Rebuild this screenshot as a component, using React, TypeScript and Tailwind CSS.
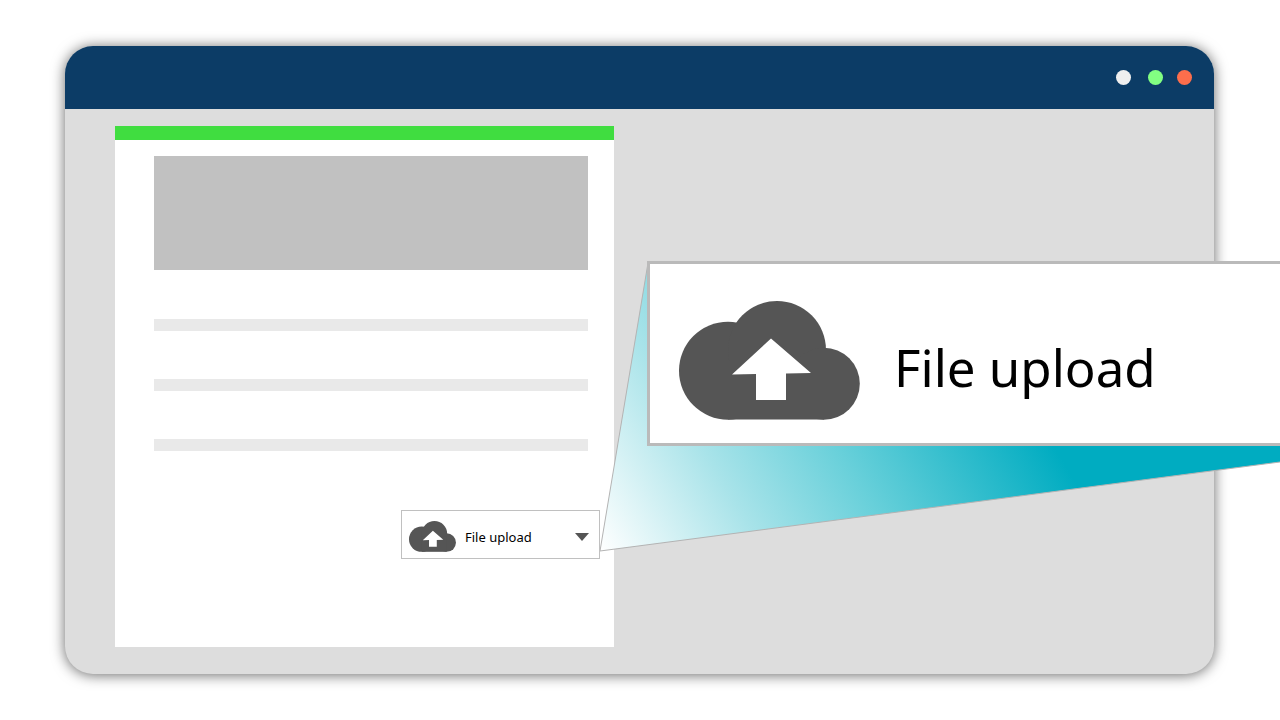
const FIELD_ROWS = ['first', 'second', 'third'];

function CloudUploadIcon({ className }: { className: string }) {
  return (
    <svg viewBox="0 0 181 119" className={className} aria-hidden="true">
      <g fill="#555555">
        <circle cx="49" cy="69.7" r="49" />
        <circle cx="98" cy="49" r="49" />
        <circle cx="144.8" cy="82.7" r="36" />
        <rect x="49" y="60" width="96" height="58.5" />
      </g>
      <path d="M92 37.5 132 72 107 72.5V99H77V73L53 73.5Z" fill="#ffffff" />
    </svg>
  );
}

function TitleBar() {
  return (
    <header className="flex h-[63px] items-center justify-end bg-[#0c3c66] pr-[22px]">
      <button type="button" aria-label="Minimize" className="mr-[17px] size-[15px] rounded-full bg-[#efefef]" />
      <button type="button" aria-label="Maximize" className="mr-[14px] size-[15px] rounded-full bg-[#82ff82]" />
      <button type="button" aria-label="Close" className="size-[15px] rounded-full bg-[#fc6e4c]" />
    </header>
  );
}

function UploadSelect() {
  return (
    <div className="flex h-[49px] w-[199px] items-center border border-[#c0c0c0] bg-white pl-[7px] pr-[10px] pt-1">
      <CloudUploadIcon className="h-[31px] w-[47px] shrink-0" />
      <select
        aria-label="Question type"
        className="ml-[9px] min-w-0 flex-1 appearance-none bg-transparent pt-px font-['Noto_Sans','Open_Sans',sans-serif] text-[13px] leading-5 text-black"
      >
        <option>File upload</option>
      </select>
      <svg viewBox="0 0 14 8" className="h-2 w-[14px] shrink-0" aria-hidden="true">
        <path d="M0 0H14L7 8Z" fill="#555555" />
      </svg>
    </div>
  );
}

function FormPage() {
  return (
    <section className="h-[521px] w-[499px] border-t-14 border-[#40dd40] bg-white pl-[39px] pr-[26px] pt-4">
      <div className="h-[114px] bg-[#c1c1c1]" />
      <div className="mt-[49px] flex flex-col gap-12">
        {FIELD_ROWS.map((row) => (
          <div key={row} className="h-3 bg-[#e9e9e9]" />
        ))}
      </div>
      <div className="-mr-3 mt-[59px] flex justify-end">
        <UploadSelect />
      </div>
    </section>
  );
}

// Light cone that joins the small control to its enlarged copy
function Beam() {
  return (
    <svg
      viewBox="0 0 680 290"
      className="absolute left-[600px] top-[262px] h-[290px] w-[680px]"
      aria-hidden="true"
    >
      <defs>
        <linearGradient id="beam" gradientUnits="userSpaceOnUse" x1="0" y1="289" x2="380" y2="61">
          <stop offset="0" stopColor="#ffffff" />
          <stop offset="0.32" stopColor="#a8e3e9" />
          <stop offset="0.58" stopColor="#68d0da" />
          <stop offset="1" stopColor="#00acc1" />
        </linearGradient>
      </defs>
      <path d="M0 289 48 1H680V200Z" fill="url(#beam)" />
      <path d="M48 1 0 289 680 200" fill="none" stroke="#b3b3b3" />
    </svg>
  );
}

function Callout() {
  return (
    <div className="absolute left-[647px] right-0 top-[261px] flex h-[185px] items-start border-3 border-r-0 border-[#bababa] bg-white pl-[29px] pt-[37px]">
      <CloudUploadIcon className="h-[119px] w-[181px] shrink-0" />
      <p className="ml-[34px] whitespace-nowrap pt-[34px] font-['Noto_Sans','Open_Sans',sans-serif] text-[51px] leading-[64px] text-black">
        File upload
      </p>
    </div>
  );
}

export default function App() {
  return (
    <div className="relative min-h-screen overflow-hidden bg-white pb-[46px] pl-[65px] pr-[66px] pt-[46px]">
      <main className="overflow-hidden rounded-[28px] bg-[#dddddd] shadow-[0_1px_14px_rgba(0,0,0,0.6)]">
        <TitleBar />
        <div className="px-[50px] pb-[27px] pt-[17px]">
          <FormPage />
        </div>
      </main>
      <Beam />
      <Callout />
    </div>
  );
}
